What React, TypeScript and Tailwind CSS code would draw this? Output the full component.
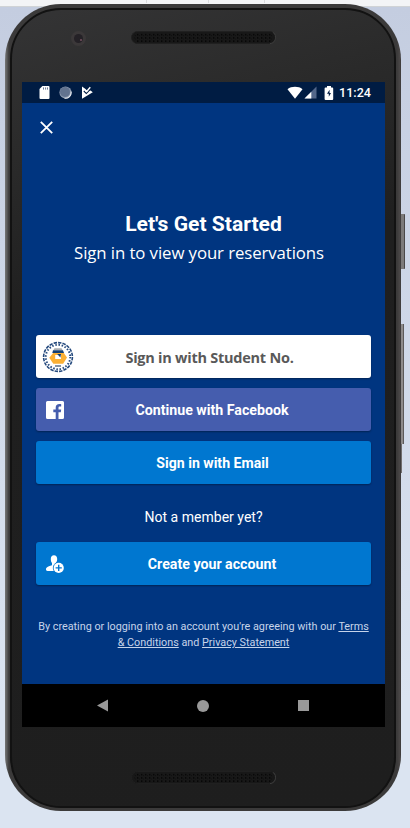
import type { ReactNode } from "react";

function SpeakerGrille() {
  return (
    <svg width="145" height="13" viewBox="0 0 145 13" aria-hidden="true">
      <defs>
        <pattern id="holes" x="1" y="2" width="4" height="3.2" patternUnits="userSpaceOnUse">
          <rect x="1" y="1" width="1.4" height="1.4" fill="#050505" />
          <rect x="3" y="2.4" width="1" height="0.8" fill="#0c0c0c" />
        </pattern>
      </defs>
      <rect x="0.5" y="0.5" width="144" height="12" rx="6" fill="#181818" stroke="#202020" />
      <path d="M139 12.5c3 0 5.5-2.5 5.5-6s-1.5-4.500-2.500-5" fill="none" stroke="#484848" strokeWidth="0.8" />
      <rect x="3" y="2" width="139" height="9" rx="4" fill="url(#holes)" />
    </svg>
  );
}

function StatusBar() {
  return (
    <div className="flex h-[21px] items-center bg-[#001c43] pr-[14px] pl-[17px] text-white">
      <svg width="11" height="13" viewBox="0 0 11 13">
        <path d="M3.400 0H9.500a1 1 0 0 1 1 1v11a1 1 0 0 1-1 1h-8a1 1 0 0 1-1-1V3z" fill="#fff" />
        <path d="M4.500 1.400v2.200M6.600 1.400v2.200M8.500 1.400v2.200" stroke="#6b7b95" strokeWidth="1" />
      </svg>
      <svg className="ml-[9px]" width="13" height="13" viewBox="0 0 13 13">
        <circle cx="6.500" cy="6.500" r="6.100" fill="#8d9bb0" />
        <circle cx="6" cy="5.900" r="5" fill="#62738f" />
        <path d="M12 5.500A5.700 5.700 0 0 1 5.500 12.200" fill="none" stroke="#e8ebf0" strokeWidth="1.100" />
      </svg>
      <svg className="ml-[9px]" width="12" height="13" viewBox="0 0 12 13">
        <path d="M1 .5 4.500 3 6 4.500 9.500 4.500 11.800 6.200 1 12.700z" fill="#fff" />
        <path d="M2.800 5 5.300 7.500 10 2.600" fill="none" stroke="#001c43" strokeWidth="1.100" />
        <path d="M4.200 4.200 5.600 5.500 9.300 1.300" fill="none" stroke="#fff" strokeWidth="1.400" />
      </svg>
      <svg className="ml-auto" width="16" height="13" viewBox="0 0 16 13">
        <path d="M.5 3.200C4.500 0 11.500 0 15.500 3.200L8 12.700z" fill="#fff" />
      </svg>
      <svg className="ml-px" width="13" height="13" viewBox="0 0 13 13">
        <path d="M12.500.5v12H.5z" fill="#53678a" />
        <path d="M7.300 5.700v6.800H.5z" fill="#fff" />
      </svg>
      <svg className="ml-[7px]" width="10" height="14" viewBox="0 0 10 14">
        <path d="M3 0h4v1.500h1.200a1 1 0 0 1 1 1V13a1 1 0 0 1-1 1H1.600a1 1 0 0 1-1-1V2.500a1 1 0 0 1 1-1H3z" fill="#fff" />
        <path d="M5.600 3.800 3 7.700h1.800v3.100L7 7.100H5.500z" fill="#001c43" />
      </svg>
      <span className="mt-px ml-[5px] text-[12.600px] leading-none font-medium">11:24</span>
    </div>
  );
}

function StudentSeal() {
  return (
    <svg width="32" height="32" viewBox="0 0 32 32">
      <circle cx="16" cy="16" r="14.400" fill="none" stroke="#24497d" strokeWidth="1.600" strokeDasharray="3.400 1.100" />
      <circle cx="16" cy="16" r="12.200" fill="none" stroke="#24497d" strokeWidth="1.900" strokeDasharray="1.500 1.700" />
      <path d="M12.500 7.200h7l1 1.700h-9z" fill="#a8adb2" />
      <path d="M11.500 11.500h10l3.500 5-3.800 6.200H11.300L7.300 16.800z" fill="#fbb034" />
      <path d="M11 9.200h10l1 2.800H10.300z" fill="#123f75" />
      <path d="M13.200 14h5.800v4h-5.800z" fill="#fff" />
      <path d="M15.200 13h3.800l-.6 3.500z" fill="#123f75" />
      <path d="M13 25h6" stroke="#354c69" strokeWidth="1.200" />
    </svg>
  );
}

function FacebookIcon() {
  return (
    <svg width="18" height="18" viewBox="0 0 18 18">
      <path fillRule="evenodd" d="M1.500 0h15A1.500 1.500 0 0 1 18 1.500v15a1.500 1.500 0 0 1-1.500 1.500h-4v-6.800h2.300l.4-2.700h-2.700V6.900c0-.8.3-1.300 1.300-1.300h1.400V3.200c-.4-.1-1-.1-1.900-.1-2.200 0-3.600 1.300-3.600 3.600v1.800H7.300v2.700h2.400V18H1.500A1.500 1.500 0 0 1 0 16.500v-15A1.500 1.500 0 0 1 1.500 0z" fill="#fff" />
    </svg>
  );
}

function AddUserIcon() {
  return (
    <svg width="18" height="18" viewBox="0 0 18 18">
      <path d="M4.800 4C4.800 1.500 6 .2 8 .2s3.200 1.300 3.200 3.800c0 1.900-.7 3.200-1.500 4v2.200l1.500.8v5H1.500C.5 16 0 15.400 0 14.300c0-1.900 1-2.500 6-4.100V8C5.300 7.200 4.800 5.900 4.800 4z" fill="#fff" />
      <circle cx="12.700" cy="12.900" r="5.900" fill="#0077d0" />
      <circle cx="12.700" cy="12.900" r="5.100" fill="#fff" />
      <path d="M12.700 9.800v6.200M9.600 12.900h6.200" stroke="#0077d0" strokeWidth="1.400" />
    </svg>
  );
}

function ActionButton({ icon, className, children }: { icon?: ReactNode; className: string; children: ReactNode }) {
  return (
    <button
      className={
        "grid h-[43px] w-full grid-cols-[32px_1fr_32px] items-center rounded-[3px] px-[6px] shadow-[0_1px_2px_rgba(0,0,0,0.35)] " +
        className
      }
    >
      <span className="flex justify-start">{icon}</span>
      <span className="text-center whitespace-nowrap">{children}</span>
    </button>
  );
}

export default function App() {
  return (
    <div className="relative flex h-[828px] w-[410px] justify-start overflow-hidden bg-[linear-gradient(#f3f4f6_0px,#f3f4f6_6px,#d0d3d6_6px,#d0d3d6_7px,#c4cde0_7px,#dbe4f1_700px,#dbe4f1_828px)] pt-1 pl-[5px] font-[Roboto,sans-serif]">
      <div className="absolute top-0 left-[146px] h-[3px] w-px bg-[#d9dadd]" />
      <div className="absolute top-0 left-[208px] h-[3px] w-px bg-[#d9dadd]" />
      <div className="absolute top-0 left-[264px] h-[3px] w-px bg-[#d9dadd]" />
      <div className="absolute top-[214px] left-[400px] h-[55px] w-[5px] rounded-r-[1px] border-r border-[#4a4848] bg-[#7c7a7a]" />
      <div className="absolute top-[324px] left-[400px] h-[120px] w-[4px] border-r border-[#5c5959] bg-[#8e8b8b]" />
      <div className="absolute top-[444px] left-[400px] h-[29px] w-[2px] bg-[#716e6e]" />

      <div className="relative h-[807px] w-[396px] rounded-[56px] bg-[linear-gradient(90deg,#777_0px,#5b5b5b_2px,#3b3a3a_4px,#3b3a3a_392px,#4b4848_395px,#353333_396px)] px-[5px] pt-[4px] pb-[3px]">
        <div className="flex h-full flex-col rounded-[51px] border-2 border-[#121212] bg-[linear-gradient(165deg,#343435_0%,#2b2b2b_15%,#1f1f1f_35%,#1e1e1e_100%)] px-[10px]">
          <div className="flex h-[72px] items-start pt-[20px]">
            <div className="mt-px ml-[49px] flex size-[15px] items-center justify-center rounded-full bg-[#3b3839]">
              <div className="flex size-[9px] items-center justify-center rounded-full bg-[#242126]">
                <div className="mt-[3px] ml-[4px] size-[2px] rounded-full bg-[#755060]" />
              </div>
            </div>
            <div className="mt-px ml-[45px]"><SpeakerGrille /></div>
          </div>

          <div className="flex h-[645px] w-[363px] shrink-0 flex-col bg-[#003580]">
            <StatusBar />
            <main className="flex h-[581px] flex-col px-[14px] text-white">
              <button className="mt-[18px] ml-[4px] size-[13px]" aria-label="Close">
                <svg width="13" height="13" viewBox="0 0 13 13">
                  <path d="m.8.8 11.400 11.400M12.200.8.800 12.200" stroke="#fff" strokeWidth="1.800" />
                </svg>
              </button>
              <h1 className="mt-[76px] text-center text-[21.100px] leading-7 font-bold">Let's Get Started</h1>
              <p className="mt-[3px] pr-[9px] text-center font-[Open_Sans,sans-serif] text-[16.800px] leading-6 tracking-[-0.090px]">Sign in to view your reservations</p>

              <div className="mt-[70px] flex flex-col gap-[10px]">
                <ActionButton icon={<StudentSeal />} className="bg-white font-[Open_Sans,sans-serif] text-[14.500px] font-bold tracking-[-0.25px] text-[#595959]">
                  <span className="relative top-px pl-[12px]">Sign in with Student No.</span>
                </ActionButton>
                <ActionButton icon={<span className="pl-[4px]"><FacebookIcon /></span>} className="bg-[#455dae] text-[14.200px] font-bold">
                  <span className="relative top-px pl-[17px]">Continue with Facebook</span>
                </ActionButton>
                <ActionButton className="bg-[#0077d0] text-[14.100px] font-bold">
                  <span className="relative top-px pl-[18px]">Sign in with Email</span>
                </ActionButton>
              </div>
              <p className="mt-[21px] text-center text-[14.050px] leading-6">Not a member yet?</p>
              <div className="mt-[13px]">
                <ActionButton icon={<span className="pl-[4px]"><AddUserIcon /></span>} className="bg-[#0077d0] text-[14.200px] font-bold">
                  <span className="relative top-px pl-[17px]">Create your account</span>
                </ActionButton>
              </div>
              <p className="mt-[34px] text-center text-[10.800px] leading-[16px] whitespace-nowrap text-[#c6d4ea]">
                By creating or logging into an account you're agreeing with our <a className="underline">Terms</a>
                <br />
                <a className="underline">&amp; Conditions</a> and <a className="underline">Privacy Statement</a>
              </p>
            </main>
            <nav className="flex h-[43px] items-center bg-black pl-[75px]">
              <svg width="11" height="13" viewBox="0 0 11 13"><path d="M11 .5v12L0 6.500z" fill="#999" /></svg>
              <div className="ml-[89px] size-[12px] rounded-full bg-[#999]" />
              <div className="ml-[89px] size-[11px] bg-[#999]" />
            </nav>
          </div>
          <div className="mt-[44px] ml-[109px]"><SpeakerGrille /></div>
        </div>
      </div>
    </div>
  );
}
